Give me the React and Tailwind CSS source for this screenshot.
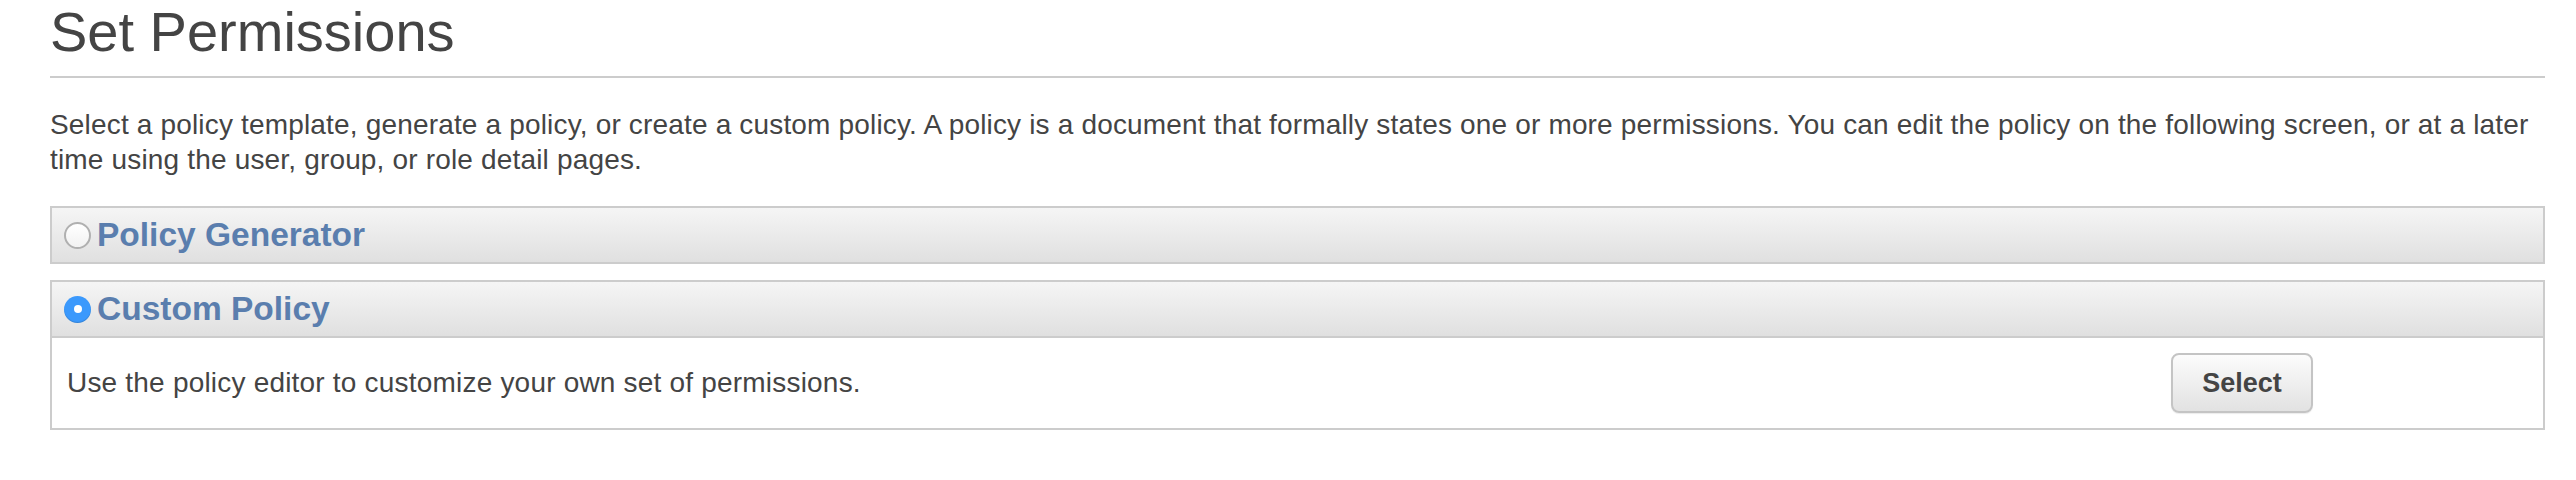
const Radio = ({ checked }) =>
    checked ? (
        <span className="flex h-[27px] w-[27px] shrink-0 items-center justify-center rounded-full bg-[#3b99fc] shadow-[inset_0_-1px_1px_rgba(0,0,0,0.15)]">
            <span className="h-[8px] w-[8px] rounded-full bg-white" />
        </span>
    ) : (
        <span className="h-[27px] w-[27px] shrink-0 rounded-full border-2 border-[#b0b0b0] bg-gradient-to-b from-white to-[#f2f2f2]" />
    );

const PanelHeader = ({ checked, children }) => (
    <div className="flex h-[54px] items-center gap-[6px] bg-gradient-to-b from-[#f5f5f5] to-[#e0e0e0] pl-[12px]">
        <Radio checked={checked} />
        <span className="text-[33.5px] font-bold leading-[54px] text-[#5a7eae]">{children}</span>
    </div>
);

export default function App() {
    return (
        <div className="bg-white pl-[50px] pr-[31px] font-['Liberation_Sans',Arial,sans-serif] text-[#444]">
            <h1 className="border-b-2 border-[#cccccc] pb-[12px] text-[56px] font-normal leading-[64px] text-[#444]">
                Set Permissions
            </h1>
            <p className="mt-[29px] text-[28px] leading-[35px] tracking-[0.17px] text-[#444]">
                Select a policy template, generate a policy, or create a custom policy. A policy is a document that
                formally states one or more permissions. You can edit the policy on the following screen, or at a later
                time using the user, group, or role detail pages.
            </p>
            <div className="mt-[29px] flex flex-col gap-[16px]">
                <div className="border-2 border-[#cccccc]">
                    <PanelHeader checked={false}>Policy Generator</PanelHeader>
                </div>
                <div className="border-2 border-[#cccccc]">
                    <div className="border-b-2 border-[#cccccc]">
                        <PanelHeader checked>Custom Policy</PanelHeader>
                    </div>
                    <div className="flex h-[90px] items-center justify-between pl-[15px] pr-[230px]">
                        <span className="text-[28px] tracking-[0.2px] text-[#444]">
                            Use the policy editor to customize your own set of permissions.
                        </span>
                        <button className="h-[60px] w-[142px] rounded-[8px] border-2 border-[#c4c4c4] bg-gradient-to-b from-[#fcfcfc] to-[#e2e2e2] text-[27px] font-bold text-[#444] shadow-[0_1px_1px_rgba(0,0,0,0.08)]">
                            Select
                        </button>
                    </div>
                </div>
            </div>
        </div>
    );
}
